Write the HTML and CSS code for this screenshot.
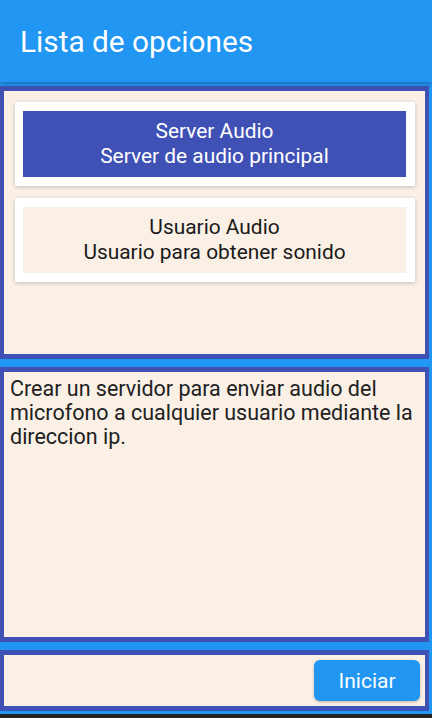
FILE: index.html
```html
<!DOCTYPE html>
<html lang="es">
<head>
<meta charset="utf-8">
<title>Lista de opciones</title>
<link rel="stylesheet" href="styles.css">
</head>
<body>
<div class="screen">
  <header class="appbar">
    <h1 class="appbar-title">Lista de opciones</h1>
  </header>
  <main class="content">
    <section class="panel panel-list">
      <div class="card">
        <div class="option option-selected">
          <span>Server Audio</span>
          <span>Server de audio principal</span>
        </div>
      </div>
      <div class="card">
        <div class="option">
          <span>Usuario Audio</span>
          <span>Usuario para obtener sonido</span>
        </div>
      </div>
    </section>
    <section class="panel panel-desc">
      <p class="desc">Crear un servidor para enviar audio del microfono a cualquier usuario mediante la direccion ip.</p>
    </section>
    <section class="panel panel-actions">
      <button class="btn">Iniciar</button>
    </section>
  </main>
  <div class="navbar"></div>
</div>
</body>
</html>
```

FILE: styles.css
```css
* { box-sizing: border-box; }
html, body { margin: 0; padding: 0; }
body {
  background: #2196F3;
  font-family: Roboto, "Noto Sans", sans-serif;
  width: 432px;
  height: 718px;
  overflow: hidden;
}
.screen {
  display: flex;
  flex-direction: column;
  height: 718px;
}
.appbar {
  height: 82px;
  background: #2196F3;
  display: flex;
  align-items: center;
  padding-left: 20px;
  box-shadow: 0 2px 4px rgba(0,0,0,0.25);
  position: relative;
  z-index: 1;
}
.appbar-title {
  margin: 0;
  color: #fff;
  font-weight: 400;
  font-size: 29.8px;
  letter-spacing: 0;
}
.content {
  flex: 1;
  display: flex;
  flex-direction: column;
  padding: 4px 3px 3px 0;
  gap: 8px;
}
.panel {
  background: #FAF0E6;
  border: 5px solid #3F51B5;
  border-left-width: 4px;
  border-right-width: 4px;
}
.panel-list {
  height: 273px;
  padding: 11px 10px 0 11px;
  display: flex;
  flex-direction: column;
  gap: 12px;
}
.card {
  background: #fff;
  padding: 9px 9px 9px 8px;
  box-shadow: 0 1px 4px rgba(0,0,0,0.22);
  border-radius: 1px;
}
.option {
  height: 66px;
  display: flex;
  flex-direction: column;
  align-items: center;
  justify-content: center;
  background: #FAF0E6;
  color: #1a1a1a;
  font-size: 20.9px;
  line-height: 25px;
}
.option-selected {
  background: #3F51B5;
  color: #fff;
}
.panel-desc {
  height: 275px;
  padding: 5px 6px 0 6px;
}
.desc {
  margin: 0;
  font-size: 21.5px;
  line-height: 24px;
  color: #212121;
}
.panel-actions {
  height: 61px;
  display: flex;
  justify-content: flex-end;
  align-items: center;
  padding-right: 5px;
}
.btn {
  width: 106px;
  height: 41px;
  border: none;
  border-radius: 6px;
  background: #2196F3;
  color: #fff;
  font-family: Roboto, "Noto Sans", sans-serif;
  font-size: 21px;
  box-shadow: 0 1px 3px rgba(0,0,0,0.25);
}
.navbar {
  height: 4px;
  background: #222;
}
```
